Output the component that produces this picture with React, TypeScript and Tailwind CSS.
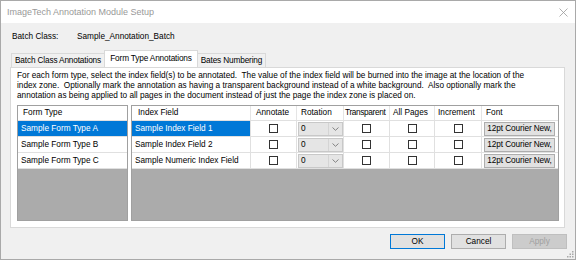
import React from "react";

const columns = [
  { name: "Index Field", w: "w-[119px]", pl: "pl-[6px]" },
  { name: "Annotate", w: "w-[46px]", pl: "pl-[5px]" },
  { name: "Rotation", w: "w-[47px]", pl: "pl-[4px]" },
  { name: "Transparent", w: "w-[46px]", pl: "pl-[1px]" },
  { name: "All Pages", w: "w-[45px]", pl: "pl-[3px]" },
  { name: "Increment", w: "w-[47px]", pl: "pl-[3px]" },
  { name: "Font", w: "w-[76px]", pl: "pl-[4px]" },
];

const formTypes = ["Sample Form Type A", "Sample Form Type B", "Sample Form Type C"];
const indexFields = ["Sample Index Field 1", "Sample Index Field 2", "Sample Numeric Index Field"];

const Check = () => (
  <div className="w-[9px] h-[9px] border border-[#333333] bg-white" />
);

const Combo = () => (
  <div className="w-[45px] h-[14px] flex items-center bg-[#e5e5e5] border border-[#c8c8c8]">
    <span className="pl-[2px] flex-1">0</span>
    <div className="w-[14px] h-full flex items-center justify-center border-l border-[#d4d4d4]">
      <svg width="7" height="4" viewBox="0 0 7 4">
        <path d="M0.5 0.5 L3.5 3.3 L6.5 0.5" fill="none" stroke="#777" strokeWidth="0.9" />
      </svg>
    </div>
  </div>
);

const FontButton = () => (
  <div className="w-[71px] h-[14px] flex items-center justify-center bg-[#e1e1e1] border border-[#adadad] whitespace-nowrap overflow-hidden tracking-[-0.1px]">
    12pt Courier New,
  </div>
);

const SizeGrip = () => (
  <svg width="7" height="7" viewBox="0 0 7 7">
    {[
      [5, 0],
      [5, 2.5],
      [2.5, 2.5],
      [5, 5],
      [2.5, 5],
      [0, 5],
    ].map(([x, y], i) => (
      <rect key={i} x={x} y={y} width="1.5" height="1.5" fill="#a8a8a8" />
    ))}
  </svg>
);

export default function App() {
  return (
    <div className="w-[576px] h-[260px] border border-[#a9a9a9] bg-[#f0f0f0] flex flex-col font-['Liberation_Sans',Arial,sans-serif] text-[8.25px] leading-[10px] text-black overflow-hidden">
      {/* Title bar */}
      <div className="h-[22px] bg-white flex items-center justify-between pl-[6px] pr-[7px] shrink-0">
        <span className="text-[9px] text-[#999999]">ImageTech Annotation Module Setup</span>
        <svg width="9" height="9" viewBox="0 0 9 9">
          <path d="M0.5 0.5 L8.5 8.5 M8.5 0.5 L0.5 8.5" stroke="#9a9a9a" strokeWidth="0.8" />
        </svg>
      </div>

      {/* Batch class */}
      <div className="flex items-center h-[10px] mt-[9px] pl-[11px]">
        <span className="w-[65px]">Batch Class:</span>
        <span>Sample_Annotation_Batch</span>
      </div>

      {/* Tabs */}
      <div className="flex items-end h-[17px] mt-[8px] pl-[10px] tracking-[-0.15px]">
        <div className="w-[94px] h-[15px] flex items-center justify-center bg-[#f0f0f0] border border-b-0 border-[#d9d9d9] -mb-px">
          Batch Class Annotations
        </div>
        <div className="w-[94px] h-[17px] flex items-center justify-center bg-white border border-b-0 border-[#d9d9d9] -ml-px relative z-10">
          Form Type Annotations
        </div>
        <div className="w-[68px] h-[15px] flex items-center justify-center bg-[#f0f0f0] border border-b-0 border-l-0 border-[#d9d9d9] -mb-px">
          Bates Numbering
        </div>
      </div>

      {/* Tab panel */}
      <div className="ml-[9px] w-[555px] h-[161px] bg-white border border-[#d9d9d9] flex flex-col px-[6px] pt-[3px] pb-[6px]">
        <div className="whitespace-pre leading-[9.75px]">
          <div>For each form type, select the index field(s) to be annotated.  The value of the index field will be burned into the image at the location of the</div>
          <div>index zone.  Optionally mark the annotation as having a transparent background instead of a white background.  Also optionally mark the</div>
          <div>annotation as being applied to all pages in the document instead of just the page the index zone is placed on.</div>
        </div>

        <div className="flex gap-[3px] mt-[5px] flex-1">
          {/* Form type grid */}
          <div className="w-[113px] flex flex-col bg-[#ababab] border border-[#a0a0a0]">
            <div className="h-[15px] bg-white flex items-center pl-[5px] border-b border-[#e0e0e0]">Form Type</div>
            {formTypes.map((f, i) => (
              <div
                key={f}
                className={`h-[16px] flex items-center pl-[3px] border-b border-[#e0e0e0] ${
                  i === 0 ? "bg-[#0078d7] text-white" : "bg-white"
                }`}
              >
                {f}
              </div>
            ))}
          </div>

          {/* Index field grid */}
          <div className="flex-1 mr-[-1px] flex flex-col bg-[#ababab] border border-[#a0a0a0]">
            <div className="h-[15px] bg-white flex border-b border-[#e0e0e0]">
              {columns.map((c, i) => (
                <div
                  key={c.name}
                  className={`${c.w} ${c.pl} flex items-center overflow-hidden ${
                    i < columns.length - 1 ? "border-r border-[#e5e5e5]" : ""
                  } whitespace-nowrap ${i === 3 ? "tracking-[-0.35px]" : ""}`}
                >
                  {c.name}
                </div>
              ))}
            </div>
            {indexFields.map((f, i) => (
              <div key={f} className="h-[16px] flex bg-white border-b border-[#e0e0e0]">
                <div
                  className={`w-[119px] flex items-center pl-[3px] border-r border-[#e0e0e0] whitespace-nowrap ${
                    i === 0 ? "bg-[#0078d7] text-white" : ""
                  }`}
                >
                  {f}
                </div>
                <div className="w-[46px] flex items-center justify-center border-r border-[#e0e0e0]">
                  <Check />
                </div>
                <div className="w-[47px] flex items-center pl-[1px] border-r border-[#e0e0e0]">
                  <Combo />
                </div>
                <div className="w-[46px] flex items-center justify-center border-r border-[#e0e0e0]">
                  <Check />
                </div>
                <div className="w-[45px] flex items-center justify-center border-r border-[#e0e0e0]">
                  <Check />
                </div>
                <div className="w-[47px] flex items-center justify-center border-r border-[#e0e0e0]">
                  <Check />
                </div>
                <div className="w-[76px] flex items-center pl-[2px]">
                  <FontButton />
                </div>
              </div>
            ))}
          </div>
        </div>
      </div>

      {/* Buttons */}
      <div className="flex justify-end gap-[6px] mt-[6px] pr-[8px]">
        <div className="w-[55px] h-[15px] flex items-center justify-center bg-[#e1e1e1] border border-[#0078d7]">OK</div>
        <div className="w-[55px] h-[15px] flex items-center justify-center bg-[#e1e1e1] border border-[#adadad]">Cancel</div>
        <div className="w-[55px] h-[15px] flex items-center justify-center bg-[#cccccc] border border-[#bfbfbf] text-[#a0a0a0]">Apply</div>
      </div>

      <div className="flex-1 flex items-end justify-end pr-[1px] pb-[1px]">
        <SizeGrip />
      </div>
    </div>
  );
}
